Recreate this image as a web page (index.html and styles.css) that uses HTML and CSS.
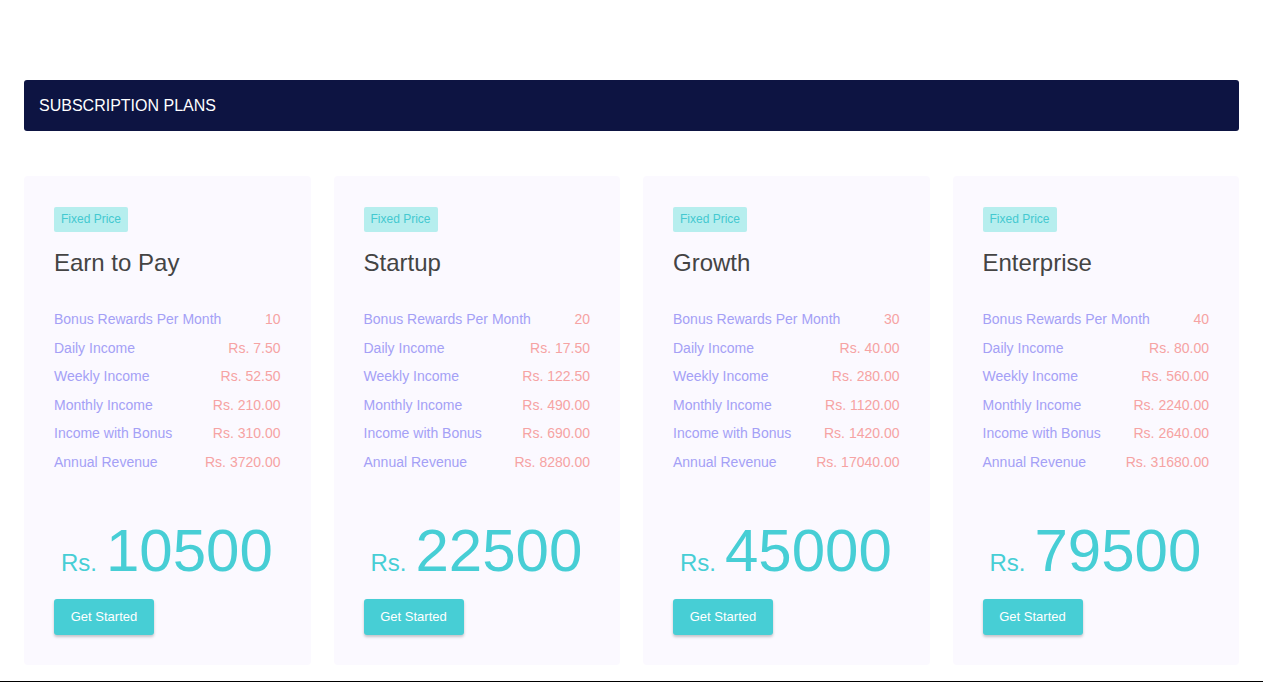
FILE: index.html
```html
<!DOCTYPE html>
<html lang="en">
<head>
<meta charset="utf-8">
<title>Subscription Plans</title>
<link rel="stylesheet" href="styles.css">
</head>
<body>
<div class="page">
  <div class="header-bar">SUBSCRIPTION PLANS</div>
  <div class="plans">
    <div class="card">
      <span class="badge">Fixed Price</span>
      <h2 class="plan-name">Earn to Pay</h2>
      <ul class="rows">
        <li><span class="label">Bonus Rewards Per Month</span><span class="value">10</span></li>
        <li><span class="label">Daily Income</span><span class="value">Rs. 7.50</span></li>
        <li><span class="label">Weekly Income</span><span class="value">Rs. 52.50</span></li>
        <li><span class="label">Monthly Income</span><span class="value">Rs. 210.00</span></li>
        <li><span class="label">Income with Bonus</span><span class="value">Rs. 310.00</span></li>
        <li><span class="label">Annual Revenue</span><span class="value">Rs. 3720.00</span></li>
      </ul>
      <div class="price"><span class="cur">Rs.</span><span class="amount">10500</span></div>
      <button class="btn">Get Started</button>
    </div>
    <div class="card">
      <span class="badge">Fixed Price</span>
      <h2 class="plan-name">Startup</h2>
      <ul class="rows">
        <li><span class="label">Bonus Rewards Per Month</span><span class="value">20</span></li>
        <li><span class="label">Daily Income</span><span class="value">Rs. 17.50</span></li>
        <li><span class="label">Weekly Income</span><span class="value">Rs. 122.50</span></li>
        <li><span class="label">Monthly Income</span><span class="value">Rs. 490.00</span></li>
        <li><span class="label">Income with Bonus</span><span class="value">Rs. 690.00</span></li>
        <li><span class="label">Annual Revenue</span><span class="value">Rs. 8280.00</span></li>
      </ul>
      <div class="price"><span class="cur">Rs.</span><span class="amount">22500</span></div>
      <button class="btn">Get Started</button>
    </div>
    <div class="card">
      <span class="badge">Fixed Price</span>
      <h2 class="plan-name">Growth</h2>
      <ul class="rows">
        <li><span class="label">Bonus Rewards Per Month</span><span class="value">30</span></li>
        <li><span class="label">Daily Income</span><span class="value">Rs. 40.00</span></li>
        <li><span class="label">Weekly Income</span><span class="value">Rs. 280.00</span></li>
        <li><span class="label">Monthly Income</span><span class="value">Rs. 1120.00</span></li>
        <li><span class="label">Income with Bonus</span><span class="value">Rs. 1420.00</span></li>
        <li><span class="label">Annual Revenue</span><span class="value">Rs. 17040.00</span></li>
      </ul>
      <div class="price"><span class="cur">Rs.</span><span class="amount">45000</span></div>
      <button class="btn">Get Started</button>
    </div>
    <div class="card">
      <span class="badge">Fixed Price</span>
      <h2 class="plan-name">Enterprise</h2>
      <ul class="rows">
        <li><span class="label">Bonus Rewards Per Month</span><span class="value">40</span></li>
        <li><span class="label">Daily Income</span><span class="value">Rs. 80.00</span></li>
        <li><span class="label">Weekly Income</span><span class="value">Rs. 560.00</span></li>
        <li><span class="label">Monthly Income</span><span class="value">Rs. 2240.00</span></li>
        <li><span class="label">Income with Bonus</span><span class="value">Rs. 2640.00</span></li>
        <li><span class="label">Annual Revenue</span><span class="value">Rs. 31680.00</span></li>
      </ul>
      <div class="price"><span class="cur">Rs.</span><span class="amount">79500</span></div>
      <button class="btn">Get Started</button>
    </div>
  </div>
</div>
<div class="bottom-rule"></div>
</body>
</html>
```

FILE: styles.css
```css
* { box-sizing: border-box; }

html, body {
  margin: 0;
  padding: 0;
  background: #ffffff;
  font-family: "Liberation Sans", Arial, sans-serif;
}

.page {
  padding: 80px 24px 0;
}

.header-bar {
  height: 51px;
  background: #0d1442;
  color: #ffffff;
  border-radius: 3px;
  font-size: 16px;
  line-height: 51px;
  padding-left: 15px;
}

.plans {
  margin-top: 45px;
  display: grid;
  grid-template-columns: repeat(4, 1fr);
  column-gap: 23px;
}

.card {
  background: #fbf9ff;
  border-radius: 4px;
  padding: 31px 30px 30px;
  display: flex;
  flex-direction: column;
  align-items: flex-start;
}

.badge {
  display: inline-block;
  height: 25px;
  line-height: 25px;
  padding: 0 7px;
  font-size: 12px;
  color: #44c9d0;
  background: #b6eeee;
  border-radius: 2px;
}

.plan-name {
  margin: 17px 0 0;
  font-size: 24px;
  font-weight: 400;
  line-height: 28px;
  color: #444444;
}

.rows {
  list-style: none;
  margin: 28px 0 0;
  padding: 0;
  width: 100%;
}

.rows li {
  display: flex;
  justify-content: space-between;
  font-size: 14px;
  line-height: 28.6px;
}

.label { color: #a4a0f6; }
.value { color: #f6a3a3; }

.price {
  margin-top: 44px;
  padding-left: 7px;
  color: #47ced5;
  display: flex;
  align-items: baseline;
  line-height: 1;
  white-space: nowrap;
}

.cur {
  font-size: 24px;
  margin-right: 9px;
}

.amount {
  font-size: 60px;
}

.btn {
  margin-top: 18px;
  width: 100px;
  height: 36px;
  border: none;
  border-radius: 3px;
  background: #47ced5;
  color: #ffffff;
  font-family: "Liberation Sans", Arial, sans-serif;
  font-size: 13px;
  padding: 0;
  box-shadow: 0 2px 3px rgba(0, 0, 0, 0.22);
  cursor: pointer;
}

.bottom-rule {
  margin-top: 16px;
  height: 1px;
  background: #000000;
}
```
